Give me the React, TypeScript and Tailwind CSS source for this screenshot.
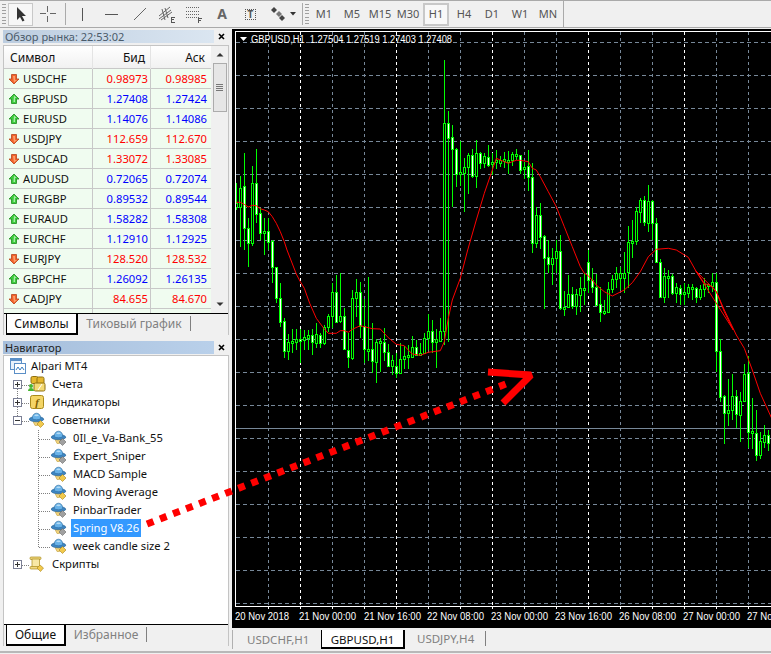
import React from "react";

const FONT = "font-['Noto_Sans','Liberation_Sans',sans-serif]";

type C = [number, number, number, number, number];
const a = (r: number[][], f: (v: number) => number): C[] =>
  r.map((c) => [f(c[0]), f(c[1]), f(c[2]), f(c[3]), c[4]] as C);
const id = (v: number) => v;
const z7 = (v: number) => 250 + v / 3;
const z8 = (v: number) => 130 + v / 3;
const z9 = (v: number) => 260 + v / 3;

const candles: C[] = [
  ...a([[183,203,207,210,0],[176,188,207,247,0],[153,186,228,250,1],[218,228,243,267,1],[166,183,243,246,0],[149,183,214,223,1],[208,213,233,240,1],[218,231,233,255,0],[218,231,242,250,1],[240,241,267,283,1],[267,267,298,303,1],[283,298,322,327,1],[318,321,351,358,1]], id),
  ...a([[252,277,302,330,0],[237,272,276,310,0],[237,268,275,300,0],[237,266,272,340,1],[240,262,270,300,0],[240,256,263,300,0],[237,256,275,315,1],[220,252,278,295,0],[250,254,280,295,1],[225,232,280,285,0],[193,198,232,245,0],[100,127,198,235,0],[75,127,215,218,1],[70,198,213,218,0],[175,198,298,300,1],[248,300,322,353,1],[120,145,323,330,0],[88,127,145,200,0],[97,127,228,265,1],[148,228,298,340,1],[82,297,302,332,0],[220,298,334,370,1],[268,275,335,400,0],[265,272,276,365,0],[235,277,307,333,1],[282,307,347,350,1],[315,331,347,375,0],[310,348,370,383,1],[280,327,370,372,0],[287,319,328,358,0],[285,315,319,358,0],[258,290,320,322,0],[270,290,315,318,1],[278,308,311,315,0],[250,265,310,313,0],[193,243,265,300,0],[210,243,277,310,1],[238,268,277,355,0],[205,243,272,275,0]], z7),
  ...a([[60,123,331,345,0],[111,123,138,342,1],[125,137,149,207,1],[148,149,174,187,1],[141,172,174,186,0],[158,167,173,212,0],[153,155,167,194,0],[149,155,176,178,1],[140,153,176,188,0],[152,153,163,169,1],[153,156,163,168,0],[145,157,165,167,1],[153,162,164,175,0],[150,160,162,169,0],[156,160,163,167,0]], id),
  ...a([[65,88,92,115,0],[62,90,93,133,0],[65,72,90,107,0],[57,72,76,90,0],[75,75,120,132,1],[95,112,118,147,0],[60,108,142,182,1],[100,142,338,368,1],[230,255,338,355,0],[220,255,320,358,1],[315,318,383,537,1],[330,382,402,430,1],[355,385,402,465,0],[330,363,383,430,0],[315,363,535,540,1],[483,530,537,557,0],[435,492,530,533,0],[470,492,527,537,1],[478,492,527,555,0],[442,475,495,545,0],[430,473,477,525,0],[360,397,450,490,1],[415,450,472,490,1],[432,472,525,525,1],[470,523,545,575,1],[510,543,546,555,0],[455,478,545,545,0],[435,448,478,490,0],[410,430,448,475,0],[410,430,445,480,0],[365,428,445,490,0],[288,337,425,475,0],[270,332,338,385,0],[230,243,333,345,0],[205,210,245,280,0],[197,210,275,288,1],[165,213,278,305,0],[210,213,280,330,1],[265,280,397,400,1],[388,397,500,505,1],[415,438,500,520,0],[420,437,440,505,0],[433,438,490,495,1],[460,472,488,520,0],[465,475,493,525,1],[460,485,488,525,0],[462,472,490,505,0],[462,472,476,510,0],[470,475,502,520,1],[465,478,502,510,0],[445,462,478,500,0],[458,463,466,488,0],[430,455,468,485,0]], z8),
  ...a([[40,65,272,335,1],[237,272,410,425,1],[405,408,458,552,1],[358,450,458,498,0],[342,408,450,480,0],[390,408,463,505,1],[395,422,465,545,0],[312,342,422,425,0],[287,338,515,565,1],[414,514,520,568,0],[450,520,585,603,1],[515,543,585,597,0],[495,526,545,565,0],[510,526,550,572,1]], z9),
];

const pts = (r: number[][], bx: number, by: number) =>
  r.map(([x, y]) => `${(bx + x / 3).toFixed(1)},${(by + y / 3).toFixed(1)}`).join(" ");

const ma = [
  pts([[13,457],[25,457],[37,463],[49,471],[61,466],[73,467],[85,476],[97,480],[109,485],[121,500],[133,520],[145,545],[157,575],[165,600]], 232, 50),
  pts([[193,72],[205,95],[217,115],[233,160],[253,205],[277,237],[289,250],[313,250],[325,242],[337,242],[349,247],[361,238],[385,227],[397,230],[421,236],[445,237],[469,263],[493,283],[517,287],[529,300],[541,312],[565,316],[589,307],[625,302],[637,275],[649,205],[661,150],[685,85],[707,0]], 232, 250),
  pts([[733,510],[757,430],[781,360],[793,325],[805,330]], 232, 50),
  pts([[13,95],[25,100],[37,95],[49,91],[61,91],[85,95],[97,115],[109,120],[121,140],[145,185],[169,230],[193,290],[217,350],[241,410],[253,430],[265,437],[289,465],[313,485],[337,498],[373,480],[397,458],[421,425],[445,380],[469,358],[505,355],[529,360],[565,382],[589,425],[613,460],[637,470],[649,485],[673,545],[700,600]], 500, 130),
  pts([[167,32],[229,95],[253,150],[289,225],[313,265],[337,330],[361,400],[395,475]], 640, 260),
].join(" ");

const axis: [number, string][] = [[235,"20 Nov 2018"],[299,"21 Nov 00:00"],[364,"21 Nov 16:00"],[427,"22 Nov 08:00"],[491,"23 Nov 00:00"],[555,"23 Nov 16:00"],[619,"26 Nov 08:00"],[683,"27 Nov 00:00"],[747,"27 Nov 16:00"]];

function Chart() {
  const vs: number[] = [];
  for (let x = 268; x < 771; x += 32) vs.push(x);
  const hs: number[] = [];
  for (let y = 42; y <= 603; y += 33) hs.push(y);
  return (
    <svg viewBox="232 29 539 599" className="block w-[539px] h-[599px] bg-black" shapeRendering="crispEdges">
      {hs.map((y) => (
        <line key={y} x1={236} x2={771} y1={y + 0.5} y2={y + 0.5} stroke="#778899" strokeDasharray="4 3" />
      ))}
      {vs.map((x) => (
        <line key={x} x1={x + 0.5} x2={x + 0.5} y1={32} y2={606} stroke={(x - 300) % 96 === 0 ? "#ffffff" : "#778899"} strokeDasharray="3 3" />
      ))}
      <line x1={236} x2={771} y1={428.5} y2={428.5} stroke="#778899" />
      {candles.map((c, i) => {
        const x = 236 + 4 * i;
        const t = Math.round(c[1]);
        const b = Math.max(Math.round(c[2]), t + 2);
        const hi = Math.round(c[0]);
        const lo = Math.round(c[3]);
        return (
          <g key={i}>
            <rect x={x} y={hi} width={1} height={Math.max(lo - hi, 1)} fill="#00ff00" />
            <rect x={x - 1} y={t} width={3} height={b - t + 1} fill="#00ff00" />
            <rect x={x} y={t + 1} width={1} height={Math.max(b - t - 1, 1)} fill={c[4] ? "#ffffff" : "#000000"} />
          </g>
        );
      })}
      <polyline points={ma} fill="none" stroke="#ff0000" strokeWidth={1} shapeRendering="auto" />
      <rect x={235} y={31} width={536} height={1} fill="#ffffff" />
      <rect x={235} y={31} width={1} height={576} fill="#ffffff" />
      <rect x={235} y={606} width={536} height={1} fill="#ffffff" />
      {vs.map((x) => (
        <rect key={x} x={x} y={606} width={1} height={3} fill="#ffffff" />
      ))}
      <polygon points="240,37 247,37 243.5,41" fill="#ffffff" shapeRendering="auto" />
      <text x={251} y={43} fill="#ffffff" fontSize="10" fontFamily="Liberation Sans" shapeRendering="auto" textLength={201} lengthAdjust="spacingAndGlyphs" xmlSpace="preserve">GBPUSD,H1  1.27504 1.27519 1.27403 1.27408</text>
      {axis.map(([x, t]) => (
        <text key={t} x={x} y={620} fill="#ffffff" fontSize="10" fontFamily="Liberation Sans" textLength={t.length === 11 ? 54 : 57} lengthAdjust="spacingAndGlyphs">{t}</text>
      ))}
    </svg>
  );
}

const rows = [
  ["USDCHF", "0.98973", "0.98985", 0],
  ["GBPUSD", "1.27408", "1.27424", 1],
  ["EURUSD", "1.14076", "1.14086", 1],
  ["USDJPY", "112.659", "112.670", 0],
  ["USDCAD", "1.33072", "1.33085", 0],
  ["AUDUSD", "0.72065", "0.72074", 1],
  ["EURGBP", "0.89532", "0.89544", 1],
  ["EURAUD", "1.58282", "1.58308", 1],
  ["EURCHF", "1.12910", "1.12925", 1],
  ["EURJPY", "128.520", "128.532", 0],
  ["GBPCHF", "1.26092", "1.26135", 1],
  ["CADJPY", "84.655", "84.670", 0],
] as const;

function Arrow({ up }: { up: boolean }) {
  return (
    <svg width="12" height="12" viewBox="0 0 12 12" className="shrink-0">
      {up ? (
        <>
          <polygon points="6,1 11,6 8.5,6 8.5,10.5 3.5,10.5 3.5,6 1,6" fill="#3ecb3e" stroke="#1d8a1d" strokeWidth="0.8" />
          <path d="M6 2.5L8.5 5H7V9H5.5" fill="#a8eca8" />
        </>
      ) : (
        <>
          <polygon points="6,11 11,6 8.5,6 8.5,1.5 3.5,1.5 3.5,6 1,6" fill="#f4622a" stroke="#b8421a" strokeWidth="0.8" />
          <path d="M5 3H7V7H9L6 9.5Z" fill="#f9a070" />
        </>
      )}
    </svg>
  );
}

function Close() {
  return (
    <svg width="7" height="7" viewBox="0 0 7 7">
      <path d="M1 1L6 6M6 1L1 6" stroke="#000" strokeWidth="1.6" />
    </svg>
  );
}

function BottomTabs({ first, second, w1, w2 }: { first: string; second: string; w1: string; w2: string }) {
  return (
    <div className="h-[22px] shrink-0 bg-[#f0f0f0] border-t border-black flex pl-[2px] text-[12px] leading-[19px]">
      <div className={`${w1} h-[21px] bg-white border border-t-0 border-black border-r-2 border-b-2 text-center text-[#111]`}>{first}</div>
      <div className={`${w2} h-[15px] mt-[2px] text-center text-[#808080] border-r border-[#808080] leading-[15px]`}>{second}</div>
    </div>
  );
}

function Market() {
  return (
    <div className="flex flex-col h-[307px]">
      <div className="flex items-center h-[13px] mt-[2px]">
        <div className="w-[211px] h-full bg-gradient-to-r from-[#bccde0] to-[#dbe6f1] text-[#4a5a6a] text-[11px] leading-[13px] pl-[2px]">Обзор рынка: 22:53:02</div>
        <div className="flex-1 flex justify-center"><Close /></div>
      </div>
      <div className="mt-[2px] flex-1 min-h-0 flex flex-col border border-[#c4c4c4] border-b-0 bg-white">
        <div className="flex-1 min-h-0 flex overflow-hidden">
          <div className="w-[207px] flex flex-col">
            <div className="grid grid-cols-[89px_58px_60px] h-[23px] shrink-0 bg-gradient-to-b from-white to-[#f1f1f1] text-[12px] text-[#111] border-b border-[#c8c8c8]">
              <div className="pl-[6px] leading-[23px] border-r border-[#e4e4e4]">Символ</div>
              <div className="pr-[5px] text-right leading-[23px] border-r border-[#e4e4e4]">Бид</div>
              <div className="pr-[6px] text-right leading-[23px]">Аск</div>
            </div>
            {rows.map(([s, b, k, up]) => (
              <div key={s} className="grid grid-cols-[89px_58px_60px] h-[20px] shrink-0 bg-[#f0fcf0] border-b border-[#c8c8c8] text-[11.2px] leading-[20px]">
                <div className="flex items-center gap-[3px] pl-[4px] border-r border-[#c8c8c8] text-[#111]"><Arrow up={!!up} /><span>{s}</span></div>
                <div className={`text-right pr-[2px] border-r border-[#c8c8c8] ${up ? "text-[#0000ff]" : "text-[#ff0000]"}`}>{b}</div>
                <div className={`text-right pr-[4px] ${up ? "text-[#0000ff]" : "text-[#ff0000]"}`}>{k}</div>
              </div>
            ))}
            <div className="grid grid-cols-[89px_58px_60px] flex-1 bg-[#f0fcf0]">
              <div className="border-r border-[#c8c8c8]" />
              <div className="border-r border-[#c8c8c8]" />
              <div />
            </div>
          </div>
          <div className="flex-1 flex flex-col items-center bg-[#f0f0f0]">
            <svg width="16" height="17" viewBox="0 0 16 17" className="shrink-0"><path d="M4.5 10.5L8 7L11.5 10.5Z" fill="#333" /></svg>
            <div className="w-[14px] h-[49px] bg-[#e6e6e6] border border-[#acacac] flex flex-col items-center justify-center gap-[1px]">
              <div className="w-[7px] h-px bg-[#777]" />
              <div className="w-[7px] h-px bg-[#777]" />
              <div className="w-[7px] h-px bg-[#777]" />
              <div className="w-[7px] h-px bg-[#777]" />
            </div>
            <svg className="mt-auto shrink-0" width="16" height="17" viewBox="0 0 16 17"><path d="M4.5 6.5L8 10L11.5 6.5Z" fill="#333" /></svg>
          </div>
        </div>
        <BottomTabs first="Символы" second="Тиковый график" w1="w-[72px]" w2="w-[113px]" />
      </div>
    </div>
  );
}

function Hat({ grey }: { grey?: boolean }) {
  const d = grey ? "#a0a0a0" : "#f2c94c";
  const e = grey ? "#666" : "#a88314";
  return (
    <svg width="16" height="16" viewBox="0 0 16 16" className="shrink-0">
      <path d="M4 9.5H10.5L8.5 13.5H6Z" fill="#f2d27a" stroke="#b8962a" strokeWidth="0.5" />
      <ellipse cx="7.5" cy="7.2" rx="7.2" ry="2.6" fill="#3d86c4" stroke="#25608f" strokeWidth="0.6" />
      <path d="M3.2 6.6C3 -0.6 12 -0.6 11.8 6.6C10 8.2 5 8.2 3.2 6.6Z" fill="#68b2e8" stroke="#2c6a9c" strokeWidth="0.6" />
      <path d="M5 3.5C6 2 9 2 10 3.5C8.5 4.4 6.5 4.4 5 3.5Z" fill="#b5dcf6" />
      <path d="M11.5 8.5L15 12L11.5 15.5L8 12Z" fill={d} stroke={e} strokeWidth="0.6" />
    </svg>
  );
}

function Box({ open }: { open?: boolean }) {
  return (
    <div className="w-[9px] h-[9px] border border-[#7b7f95] bg-white relative shrink-0">
      <div className="absolute left-[1px] top-[3px] w-[5px] h-px bg-[#333]" />
      {!open && <div className="absolute left-[3px] top-[1px] w-px h-[5px] bg-[#333]" />}
    </div>
  );
}

function AlpariIcon() {
  return (
    <svg width="16" height="16" viewBox="0 0 16 16" className="shrink-0">
      <rect x="0.5" y="0.5" width="11" height="11" fill="#e8f1fb" stroke="#5b8fc7" />
      <rect x="0.5" y="0.5" width="11" height="2.5" fill="#5b8fc7" />
      <rect x="4.5" y="5.5" width="11" height="10" fill="#ffffff" stroke="#5b8fc7" />
      <path d="M6 12L8 9L10 12L12 9L14 12" fill="none" stroke="#3b7ec0" />
    </svg>
  );
}

function AccountsIcon() {
  return (
    <svg width="18" height="16" viewBox="0 0 18 16" className="shrink-0">
      <rect x="3" y="0.5" width="7" height="7" rx="1.5" fill="#e5b72e" stroke="#8f7010" />
      <rect x="9" y="1" width="7" height="7" rx="1.5" fill="#e5b72e" stroke="#8f7010" />
      <rect x="6" y="7" width="11" height="8" rx="1.5" fill="#f4da75" stroke="#8f7010" />
      <path d="M10 14L14 8" stroke="#fff" strokeWidth="1" />
      <circle cx="3" cy="10" r="2" fill="#46b52f" />
      <path d="M0 15C0 11 6 11 6 15Z" fill="#46b52f" />
    </svg>
  );
}

function IndicatorIcon() {
  return (
    <svg width="16" height="16" viewBox="0 0 16 16" className="shrink-0">
      <rect x="1.5" y="1.5" width="13" height="13" rx="2" fill="#f4d566" stroke="#a98a1b" />
      <text x="8" y="12" textAnchor="middle" fontSize="11" fontStyle="italic" fontWeight="700" fontFamily="Liberation Serif" fill="#7a5c00">f</text>
    </svg>
  );
}

function ScriptIcon() {
  return (
    <svg width="16" height="16" viewBox="0 0 16 16" className="shrink-0">
      <rect x="1" y="1" width="11" height="2.5" rx="1" fill="#f1d980" stroke="#a98a1b" strokeWidth="0.7" />
      <rect x="3" y="3" width="7.5" height="8.5" fill="#f8e8a5" stroke="#a98a1b" strokeWidth="0.7" />
      <rect x="1" y="10.5" width="9" height="2.5" rx="1" fill="#f1d980" stroke="#a98a1b" strokeWidth="0.7" />
      <path d="M11 9L14.5 12L11.5 15.5L8 12Z" fill="#f2c94c" stroke="#a88314" strokeWidth="0.6" />
    </svg>
  );
}

const advisors: [string, boolean][] = [
  ["0Il_e_Va-Bank_55", true],
  ["Expert_Sniper", true],
  ["MACD Sample", false],
  ["Moving Average", false],
  ["PinbarTrader", true],
  ["Spring V8.26", true],
  ["week candle size 2", false],
];

function Navigator() {
  const Top = ({ icon, label, open }: { icon: React.ReactNode; label: string; open?: boolean }) => (
    <div className="h-[18px] flex items-center pl-[9px]">
      <Box open={open} />
      <div className="w-[8px]" />
      <div className="w-[16px] flex justify-center -ml-[1px] mr-[1px]">{icon}</div>
      <span className="ml-[6px]">{label}</span>
    </div>
  );
  return (
    <div className="flex flex-col h-[311px]">
      <div className="flex items-center h-[13px] mt-[6px]">
        <div className="w-[211px] h-full bg-gradient-to-r from-[#a6bedb] to-[#b9d0ea] text-[#222] text-[11px] leading-[13px] pl-[2px]">Навигатор</div>
        <div className="flex-1 flex justify-center"><Close /></div>
      </div>
      <div className="mt-[1px] flex-1 flex flex-col border border-[#c4c4c4] border-b-0 bg-white">
        <div className="flex-1 relative pt-[1px] text-[11.2px] text-[#111]">
          <svg className="absolute left-0 top-0" width="60" height="220" fill="none" stroke="#808080" strokeDasharray="1 1" shapeRendering="crispEdges">
            <path d="M34.5 74V191M34.5 83H46M34.5 101H46M34.5 119H46M34.5 137H46M34.5 155H46M34.5 173H46M34.5 191H46" />
            <path d="M18 29H26M18 47H26M18 65H26M18 209H26M13.5 33V42M13.5 51V60" />
          </svg>
          <div className="h-[18px] flex items-center pl-[6px] relative">
            <AlpariIcon />
            <span className="ml-[5px]">Alpari MT4</span>
          </div>
          <div className="relative">
            <Top icon={<AccountsIcon />} label="Счета" />
            <Top icon={<IndicatorIcon />} label="Индикаторы" />
            <Top icon={<Hat />} label="Советники" open />
            {advisors.map(([n, g]) => (
              <div key={n} className="h-[18px] flex items-center pl-[47px]">
                <Hat grey={g} />
                {n === "Spring V8.26" ? (
                  <span className="ml-[4px] px-[2px] h-[18px] leading-[18px] bg-[#3399ff] text-white">{n}</span>
                ) : (
                  <span className="ml-[6px]">{n}</span>
                )}
              </div>
            ))}
            <Top icon={<ScriptIcon />} label="Скрипты" />
          </div>
        </div>
        <BottomTabs first="Общие" second="Избранное" w1="w-[60px]" w2="w-[81px]" />
      </div>
    </div>
  );
}

function Grip() {
  return (
    <div className="w-[4px] h-[21px] flex flex-col justify-between mx-[2px]">
      {Array.from({ length: 7 }).map((_, i) => (
        <div key={i} className="w-[4px] h-px bg-[#a0a0a0]" />
      ))}
    </div>
  );
}

const I = ({ w = 28, children }: { w?: number; children: React.ReactNode }) => (
  <div className="h-[22px] flex items-center justify-center shrink-0 text-[#555]" style={{ width: w }}>{children}</div>
);

function Toolbar() {
  const tf = ["M1", "M5", "M15", "M30", "H1", "H4", "D1", "W1", "MN"];
  return (
    <div className="h-[28px] shrink-0 bg-[#f0f0f0] border-t border-t-[#a9a9a9] border-b border-b-[#a9a9a9] flex items-center text-[11px] text-[#555]">
      <Grip />
      <div className="w-[25px] h-[23px] border border-[#c8c8c8] bg-[#f7f7f7] flex items-center justify-center">
        <svg width="12" height="16" viewBox="0 0 12 16"><path d="M2 1V14L5 11L7.5 15.5L9.5 14.5L7 10L11 10Z" fill="#333" /></svg>
      </div>
      <I w={29}>
        <svg width="16" height="16" viewBox="0 0 16 16" shapeRendering="crispEdges"><path d="M0 7.5H6M10 7.5H16M7.5 0V6M7.5 10V16" stroke="#666" /></svg>
      </I>
      <div className="w-px h-[22px] bg-[#aaa] ml-[3px]" />
      <I w={33}><div className="w-px h-[13px] bg-[#555]" /></I>
      <I w={25}><div className="w-[13px] h-px bg-[#555]" /></I>
      <I w={31}>
        <svg width="14" height="14" viewBox="0 0 14 14"><path d="M1 13L13 1" stroke="#666" /></svg>
      </I>
      <I w={23}>
        <svg width="18" height="17" viewBox="0 0 18 17"><path d="M1 10L12 1M1 13L13 4M3 14L14 6M4 3L7 14M7 2L10 12" stroke="#666" fill="none" /><path d="M13 11H17M13 11V16H17M13 13.5H16" stroke="#555" fill="none" shapeRendering="crispEdges" /></svg>
      </I>
      <I w={31}>
        <svg width="18" height="17" viewBox="0 0 18 17" shapeRendering="crispEdges"><path d="M1 1.5H14M1 5.5H14M1 8.5H14M1 11.5H14" stroke="#666" strokeDasharray="1 1" /><path d="M13 12H17M13 12V17M13 14.5H16" stroke="#555" fill="none" /></svg>
      </I>
      <I w={26}><span className="text-[14px] font-bold leading-none text-[#666]">A</span></I>
      <I w={31}>
        <div className="w-[11px] h-[11px] border border-dotted border-[#555] flex items-center justify-center text-[10px] font-bold leading-none">T</div>
      </I>
      <I w={24}>
        <svg width="15" height="14" viewBox="0 0 15 14"><path d="M3 0L6 3L3 6L0 3Z" fill="#444" /><path d="M8 4L11 7L8 10L5 7Z" fill="#777" /><path d="M11 8L14 11L11 14L8 11Z" fill="#444" /></svg>
      </I>
      <svg width="6" height="4" viewBox="0 0 6 4"><path d="M0 0H6L3 3.5Z" fill="#333" /></svg>
      <div className="w-px h-[22px] bg-[#aaa] ml-[6px]" />
      <Grip />
      <div className="flex -ml-px">
        {tf.map((t) => (
          <div key={t} className="w-[28px] h-[23px] flex items-center justify-center">
            <div className={`h-[23px] flex items-center justify-center ${t === "H1" ? "w-[26px] border-2 border-[#c8c8c8] bg-[#f8f8f8]" : ""}`}>{t}</div>
          </div>
        ))}
      </div>
      <div className="w-px h-[26px] bg-[#aaa] ml-px" />
    </div>
  );
}

function ChartTabs() {
  return (
    <div className="h-[21px] shrink-0 flex items-start bg-[#f0f0f0] text-[11.5px] leading-[19px] text-[#808080] pt-[2px]">
      <div className="w-[89px] h-[19px] border-l border-[#b0b0b0] pl-[14px]">USDCHF,H1</div>
      <div className="w-[84px] h-[19px] bg-white border border-t-0 border-black border-r-2 border-b-2 text-center text-[#111]">GBPUSD,H1</div>
      <div className="w-[81px] h-[15px] mt-[1px] pl-[12px] border-r border-[#808080] leading-[15px]">USDJPY,H4</div>
    </div>
  );
}

export default function App() {
  return (
    <div className={`relative w-[771px] h-[654px] overflow-hidden bg-[#f0f0f0] flex flex-col ${FONT}`}>
      <Toolbar />
      <div className="flex-1 flex min-h-0">
        <div className="w-[232px] shrink-0 pl-[3px] pr-[3px] flex flex-col">
          <Market />
          <Navigator />
        </div>
        <div className="flex-1 flex flex-col min-w-0 pt-px">
          <Chart />
          <ChartTabs />
        </div>
      </div>
      <div className="h-[2px] shrink-0 bg-[#b8b8b8] mb-[1px]" />
      <svg className="absolute left-0 top-0 pointer-events-none" width="771" height="654" fill="none" stroke="#ff0000">
        <path d="M147 524L511 382" strokeWidth="7" strokeDasharray="7 7" />
        <path d="M488 372L531 375L503 403" strokeWidth="7" strokeLinejoin="bevel" />
      </svg>
    </div>
  );
}
